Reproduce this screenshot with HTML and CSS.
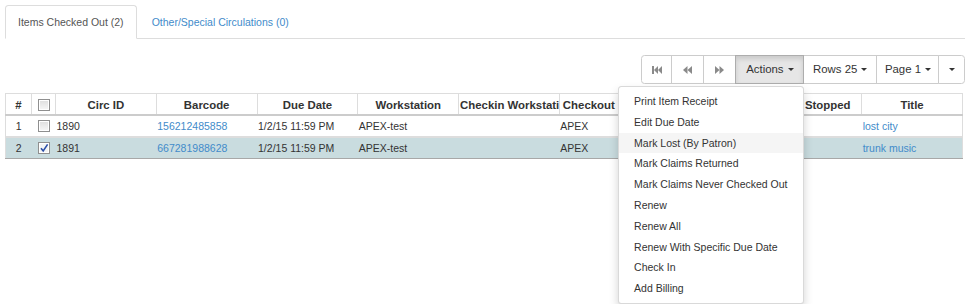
FILE: index.html
```html
<!DOCTYPE html>
<html lang="en">
<head>
  <meta charset="UTF-8">
  <meta name="viewport" content="width=device-width, initial-scale=1.0">
  <title>Items Checked Out</title>
  <link rel="stylesheet" href="styles.css">
</head>
<body>
  <div class="page">
    <ul class="tabs">
      <li class="tab active"><a>Items Checked Out (2)</a></li>
      <li class="tab"><a>Other/Special Circulations (0)</a></li>
    </ul>

    <div class="toolbar">
      <div class="btn-group">
        <button class="btn icon first">
          <svg width="10" height="8" viewBox="0 0 10 8"><rect x="0" y="0" width="2" height="8"/><polygon points="2,4 6,0 6,8"/><polygon points="6,4 10,0 10,8"/></svg>
        </button>
        <button class="btn icon">
          <svg width="9" height="8" viewBox="0 0 9 8"><polygon points="0,4 4.5,0 4.5,8"/><polygon points="4.5,4 9,0 9,8"/></svg>
        </button>
        <button class="btn icon">
          <svg width="9" height="8" viewBox="0 0 9 8"><polygon points="9,4 4.5,0 4.5,8"/><polygon points="4.5,4 0,0 0,8"/></svg>
        </button>
        <div class="dropdown">
          <button class="btn pressed">Actions <span class="caret"></span></button>
          <ul class="menu">
            <li><a>Print Item Receipt</a></li>
            <li><a>Edit Due Date</a></li>
            <li class="hover"><a>Mark Lost (By Patron)</a></li>
            <li><a>Mark Claims Returned</a></li>
            <li><a>Mark Claims Never Checked Out</a></li>
            <li><a>Renew</a></li>
            <li><a>Renew All</a></li>
            <li><a>Renew With Specific Due Date</a></li>
            <li><a>Check In</a></li>
            <li><a>Add Billing</a></li>
          </ul>
        </div>
        <button class="btn">Rows 25 <span class="caret"></span></button>
        <button class="btn page-btn">Page 1 <span class="caret"></span></button>
        <button class="btn last"><span class="caret"></span></button>
      </div>
    </div>

    <table class="grid">
      <colgroup>
        <col class="c-num"><col class="c-check">
        <col><col><col><col><col><col><col><col><col>
      </colgroup>
      <thead>
        <tr>
          <th>#</th>
          <th><span class="check"></span></th>
          <th>Circ ID</th>
          <th>Barcode</th>
          <th>Due Date</th>
          <th>Workstation</th>
          <th>Checkin Workstation</th>
          <th>Checkout Library</th>
          <th>Checkin Library</th>
          <th>Fines Stopped</th>
          <th>Title</th>
        </tr>
      </thead>
      <tbody>
        <tr>
          <td class="num">1</td>
          <td class="box"><span class="check"></span></td>
          <td>1890</td>
          <td><a>156212485858</a></td>
          <td>1/2/15 11:59 PM</td>
          <td>APEX-test</td>
          <td></td>
          <td>APEX</td>
          <td></td>
          <td></td>
          <td><a>lost city</a></td>
        </tr>
        <tr class="selected">
          <td class="num">2</td>
          <td class="box"><span class="check on"><svg width="10" height="10" viewBox="0 0 10 10"><path d="M2 5.2 L4.2 8 L8.6 1.4" fill="none" stroke="#2b4fa8" stroke-width="1.6"/></svg></span></td>
          <td>1891</td>
          <td><a>667281988628</a></td>
          <td>1/2/15 11:59 PM</td>
          <td>APEX-test</td>
          <td></td>
          <td>APEX</td>
          <td></td>
          <td></td>
          <td><a>trunk music</a></td>
        </tr>
      </tbody>
    </table>
  </div>
</body>
</html>
```

FILE: styles.css
```css
body {
  margin: 0;
  min-height: 100vh;
  font-family: "Liberation Sans", Arial, sans-serif;
  font-size: 10.5px;
  color: #333;
  background: #fff;
}

a {
  color: #428bca;
  text-decoration: none;
}

.page {
  padding: 5px 0 0 5px;
}

/* tabs */
.tabs {
  display: flex;
  list-style: none;
  margin: 0;
  padding: 0;
  border-bottom: 1px solid #ddd;
}

.tab a {
  display: block;
  padding: 8.5px 12px;
  line-height: 15px;
  margin-right: 2px;
  margin-bottom: -1px;
  border: 1px solid transparent;
  border-radius: 3.5px 3.5px 0 0;
}

.tab.active a {
  color: #555;
  background: #fff;
  border-color: #ddd;
  border-bottom-color: transparent;
}

/* toolbar */
.toolbar {
  display: flex;
  justify-content: flex-end;
  margin-top: 16px;
}

.btn-group {
  display: flex;
}

.btn {
  height: 29px;
  padding: 0 8.5px 0 9px;
  margin-left: -1px;
  border: 1px solid #ccc;
  background: #fff;
  color: #333;
  font: inherit;
  font-size: 11.4px;
  line-height: 27px;
  display: flex;
  align-items: center;
  gap: 4px;
}

.btn.page-btn {
  padding: 0 7px 0 8px;
}

.btn.first {
  margin-left: 0;
  border-radius: 3.5px 0 0 3.5px;
}

.btn.last {
  padding: 0 9.5px;
  border-radius: 0 3.5px 3.5px 0;
}

.btn.icon {
  width: 33px;
  justify-content: center;
  padding: 0;
}

.btn.icon.first {
  width: 31px;
}

.btn.icon svg {
  fill: #8a8a8a;
}

.btn.pressed {
  padding: 0 9.5px 0 10px;
  background: #e6e6e6;
  border-color: #adadad;
  box-shadow: inset 0 3px 5px rgba(0, 0, 0, 0.125);
}

.caret {
  display: inline-block;
  width: 0;
  height: 0;
  border-top: 3.5px solid #333;
  border-left: 3.5px solid transparent;
  border-right: 3.5px solid transparent;
}

.dropdown {
  position: relative;
  display: flex;
  margin-left: -1px;
}

.dropdown .btn {
  margin-left: 0;
}

.menu {
  position: absolute;
  top: calc(100% + 2px);
  right: 0;
  z-index: 10;
  width: 186px;
  box-sizing: border-box;
  margin: 0;
  padding: 4px 0;
  list-style: none;
  background: #fff;
  border: 1px solid rgba(0, 0, 0, 0.15);
  border-radius: 3.5px;
  box-shadow: 0 5px 10px rgba(0, 0, 0, 0.175);
}

.menu a {
  display: block;
  padding: 3px 15px;
  line-height: 14.8px;
  color: #333;
  white-space: nowrap;
}

.menu .hover a {
  background: #f5f5f5;
}

/* grid */
.grid {
  margin-top: 9px;
  width: 958px;
  table-layout: fixed;
  border-collapse: collapse;
  border: 1px solid #ddd;
  border-bottom: 1px solid #a8a8a8;
}

.grid .c-num {
  width: 26px;
}

.grid .c-check {
  width: 24px;
}

.grid th {
  padding: 4px 1px 1px;
  line-height: 15px;
  font-size: 11.4px;
  font-weight: bold;
  text-align: center;
  white-space: nowrap;
  overflow: hidden;
  border: 1px solid #ddd;
  border-bottom: 2px solid #ccc;
}

.grid td {
  padding: 2.5px 1px;
  line-height: 15px;
  white-space: nowrap;
  overflow: hidden;
  border-top: 2px solid #ddd;
}

.grid td.num {
  text-align: center;
}

.grid .box,
.grid th:nth-child(2) {
  text-align: center;
}

.grid tr.selected td {
  background: #c9dcdf;
}

.check {
  display: inline-block;
  box-sizing: border-box;
  width: 12px;
  height: 12px;
  vertical-align: middle;
  border: 1px solid #8f8f8f;
  background: linear-gradient(#dedede, #f7f7f7);
  box-shadow: inset 0 0 0 1px #fff;
  position: relative;
  top: -1px;
}

.check.on {
  background: #f4f4f4;
}

.check.on svg {
  display: block;
  margin: 0;
}
```
